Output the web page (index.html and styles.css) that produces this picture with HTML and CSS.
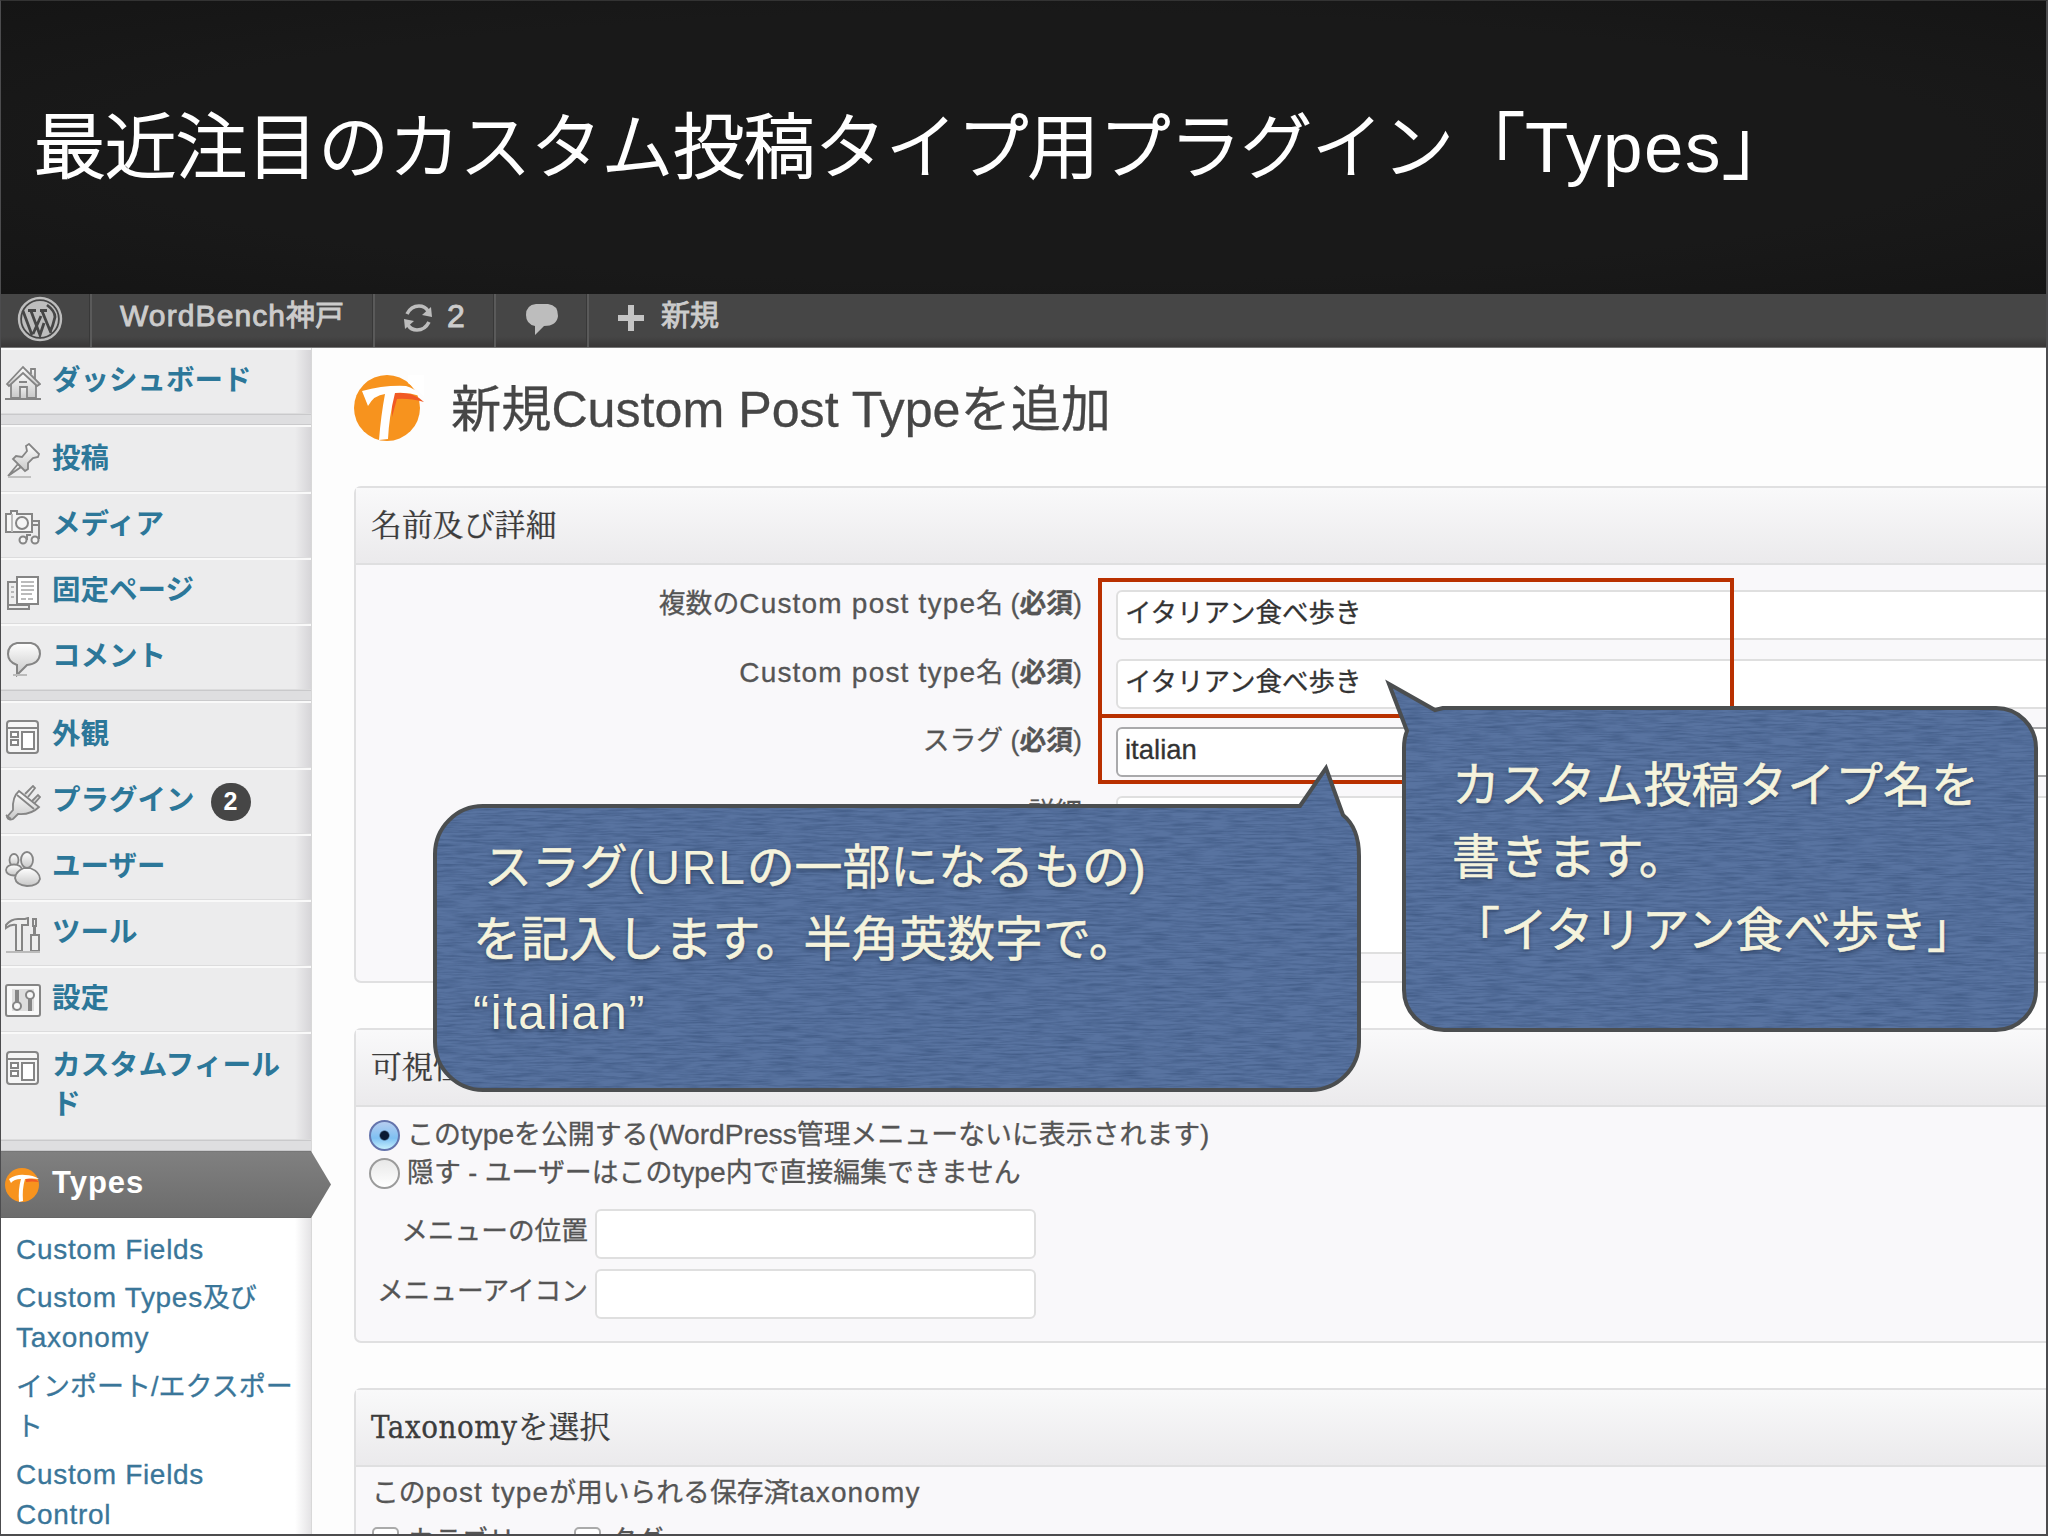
FILE: index.html
```html
<!DOCTYPE html>
<html lang="ja">
<head>
    <meta charset="UTF-8">
    <meta name="viewport" content="width=device-width, initial-scale=1.0">
    <title>最近注目のカスタム投稿タイプ用プラグイン「Types」</title>
    <link rel="stylesheet" href="styles.css">
</head>
<body>
<svg class="defs" width="0" height="0">
    <defs>
        <linearGradient id="metal" x1="0" y1="0" x2="0" y2="1">
            <stop offset="0" stop-color="#fff"/>
            <stop offset="1" stop-color="#c8c8c8"/>
        </linearGradient>
        <filter id="denim" x="0" y="0" width="100%" height="100%" color-interpolation-filters="sRGB">
            <feTurbulence type="fractalNoise" baseFrequency="0.035 0.45" numOctaves="3" seed="4"/>
            <feColorMatrix values="0 0 0 0 .2  0 0 0 0 .3  0 0 0 0 .46  1.1 0 0 0 -.4"/>
            <feComposite in2="SourceGraphic" operator="in" result="grain"/>
            <feMerge><feMergeNode in="SourceGraphic"/><feMergeNode in="grain"/></feMerge>
        </filter>
        <symbol id="icon-window" viewBox="0 0 36 36">
            <rect x="2" y="2" width="31" height="32" rx="3" fill="#f6f6f6" stroke="#858585" stroke-width="2"/>
            <path d="M2 9H33" stroke="#858585" stroke-width="2"/>
            <path d="M6 13h7v5H6zM6 21h7v5H6zM17 13h12v17H17z" fill="#fff" stroke="#858585" stroke-width="2"/>
        </symbol>
        <symbol id="icon-types" viewBox="0 0 70 66">
            <ellipse cx="33" cy="33" rx="33" ry="33" fill="#f7931e"/>
            <path d="M54 8L64 15L71 23V0H54Z" fill="#fff"/>
            <path d="M38 18Q58 15 70 27Q55 23 43 24L38 42Z" fill="#f15a24"/>
            <path d="M8 16Q30 10 52 11Q61 13 66 21Q54 17 41 18Q35 42 34 64L25 65Q27 40 31 19Q20 20 14 31Z" fill="#fff"/>
        </symbol>
        <symbol id="icon-types-small" viewBox="0 0 36 36">
            <circle cx="17" cy="18" r="17" fill="#f7931e"/>
            <path d="M4 12Q12 7 20 8Q28 8 34 12Q27 11 20 12Q17 22 18 34L14 35Q13 22 16 12Q9 12 6 16Z" fill="#fff"/>
            <path d="M21 12Q30 11 34 15Q27 14 21 15Z" fill="#f15a24"/>
        </symbol>
    </defs>
</svg>
<div class="slide">
    <header class="slide-header">
        <h1>最近注目のカスタム投稿タイプ用プラグイン「<span>Types</span>」</h1>
    </header>

    <nav class="adminbar">
        <div class="bar-item bar-logo">
            <svg width="46" height="46" viewBox="0 0 46 46">
                <circle cx="23" cy="23" r="21" fill="none" stroke="#bdbdbd" stroke-width="2.4"/>
                <circle cx="23" cy="23" r="18" fill="#bdbdbd"/>
                <path d="M6 15L15 39M14 15L23 39L27 27M25 15L34 37M11 14.500H19M23 14.500H30M30 9Q38 15 38 21Q36 30 33 36M16 38L24 20" fill="none" stroke="#464646" stroke-width="2.800"/>
            </svg>
        </div>
        <div class="bar-item bar-site"><span class="en">WordBench</span>神戸</div>
        <div class="bar-item bar-update">
            <svg width="32" height="30" viewBox="0 0 32 30">
                <path d="M5 11Q9 3 17 3Q23 3 26 8M27 19Q23 27 15 27Q9 27 6 22" fill="none" stroke="#bdbdbd" stroke-width="3.600"/>
                <path d="M30 14L20 12L29 4ZM2 16L12 18L3 26Z" fill="#bdbdbd"/>
            </svg>
            <span>2</span>
        </div>
        <div class="bar-item bar-comment">
            <svg width="32" height="32" viewBox="0 0 32 32">
                <path d="M10 0H22Q32 1 32 12Q31 22 18 22L9 31V22Q0 20 0 11Q0 1 10 0Z" fill="#bdbdbd"/>
            </svg>
        </div>
        <div class="bar-item bar-new">
            <svg width="26" height="26" viewBox="0 0 26 26"><path d="M10 0h6v10h10v6H16v10h-6V16H0v-6h10z" fill="#c4c4c4"/></svg>
            <span>新規</span>
        </div>
    </nav>

    <div class="admin">
        <aside class="sidebar">
            <ul class="menu">
                <li class="first">
                    <svg class="icon" viewBox="0 0 36 36" fill="url(#metal)" stroke="#858585" stroke-width="1.800">
                        <path d="M26 9V4h4v10"/><path d="M6 18V33H31V18L18 6Z"/><path d="M2 19L18 2L35 19L32 21L18 8L4 21Z"/>
                        <path d="M15 33V22h7v11M14 17h8M0 34H36" />
                    </svg>
                    <span>ダッシュボード</span>
                </li>
                <li class="sep"></li>
                <li>
                    <svg class="icon" viewBox="0 0 36 36" fill="url(#metal)" stroke="#858585" stroke-width="1.800">
                        <path d="M3 33L13 21L16 24Z"/><path d="M21 3L24 1L34 11L33 14L28 15L23 20L23 26L20 28L8 16L11 13L17 14L22 8Z"/>
                        <path d="M3 34H26" stroke="#bbb"/>
                    </svg>
                    <span>投稿</span>
                </li>
                <li>
                    <svg class="icon" viewBox="0 0 36 36" fill="#f5f5f5" stroke="#858585" stroke-width="2">
                        <path d="M1 5H6V2H12V5H27V23H1Z"/><path d="M7 5V23" stroke="#bbb"/><circle cx="17" cy="14" r="6"/>
                        <path d="M22 31V26H26M34 30V12H27M34 16H28" fill="none"/><circle cx="18" cy="31" r="3.500"/><circle cx="30" cy="31" r="3.500"/>
                    </svg>
                    <span>メディア</span>
                </li>
                <li>
                    <svg class="icon" viewBox="0 0 36 36" fill="#eee" stroke="#858585" stroke-width="2">
                        <path d="M3 7H14V34H3Z"/><path d="M3 30H24V34H3Z"/><path d="M12 2H33V29H12Z" fill="#fff"/>
                        <path d="M16 7H29M16 11H29M16 15H29M16 19H27M16 24H21M23 24H28M6 12H9M6 17H9M6 22H9" stroke="#a5a5a5" stroke-width="1.500"/>
                    </svg>
                    <span>固定ページ</span>
                </li>
                <li class="last">
                    <svg class="icon" viewBox="0 0 36 36" fill="url(#metal)" stroke="#858585" stroke-width="2">
                        <path d="M12 2H26Q35 4 35 13Q34 23 22 24L12 34V24Q3 21 3 13Q3 4 12 2Z"/><path d="M8 34H22" stroke="#bbb"/>
                    </svg>
                    <span>コメント</span>
                </li>
                <li class="sep"></li>
                <li>
                    <svg class="icon"><use href="#icon-window"/></svg>
                    <span>外観</span>
                </li>
                <li>
                    <svg class="icon" viewBox="0 0 36 36" fill="url(#metal)" stroke="#858585" stroke-width="1.800">
                        <path d="M20 9L28 1L30 3L23 12M27 16L33 10L35 12L29 19"/><path d="M14 6L34 22Q26 30 13 29L8 34Q4 36 2 32L8 25Q7 12 14 6Z"/>
                        <path d="M12 10L29 24M1 30L6 34" fill="none"/>
                    </svg>
                    <span>プラグイン</span><b class="badge">2</b>
                </li>
                <li>
                    <svg class="icon" viewBox="0 0 36 36" fill="url(#metal)" stroke="#858585" stroke-width="1.800">
                        <ellipse cx="9" cy="9" rx="4.500" ry="6"/><ellipse cx="9" cy="19" rx="8" ry="5.500"/>
                        <ellipse cx="22" cy="9" rx="6" ry="8"/><path d="M19 17H25Q35 21 35 28Q33 35 22 35Q11 34 10 27Q11 20 19 17Z"/>
                    </svg>
                    <span>ユーザー</span>
                </li>
                <li>
                    <svg class="icon" viewBox="0 0 36 36" fill="#eee" stroke="#858585" stroke-width="2">
                        <path d="M1 8Q6 2 13 2H20L23 1V8H17V34H11V8Q6 7 1 11Z"/><path d="M28 2H31V9H30V18H34V34H26V18H29V9H28Z"/><path d="M1 35H35" stroke="#bbb"/>
                    </svg>
                    <span>ツール</span>
                </li>
                <li>
                    <svg class="icon" viewBox="0 0 36 36" fill="#f8f8f8" stroke="#858585" stroke-width="2">
                        <rect x="1" y="2" width="34" height="31" rx="2"/><path d="M7 6H29V28H7Z" fill="#ddd" stroke="none"/>
                        <path d="M12 7V19M25 16V28" stroke-width="4"/><circle cx="12" cy="23" r="4"/><circle cx="25" cy="12" r="4"/>
                    </svg>
                    <span>設定</span>
                </li>
                <li class="tall">
                    <svg class="icon"><use href="#icon-window"/></svg>
                    <span>カスタムフィールド</span>
                </li>
                <li class="sep"></li>
                <li class="current">
                    <svg class="icon"><use href="#icon-types-small"/></svg>
                    <span>Types</span>
                </li>
            </ul>
            <ul class="submenu">
                <li><span class="en">Custom Fields</span></li>
                <li><span class="en">Custom Types</span>及び<br><span class="en">Taxonomy</span></li>
                <li>インポート/エクスポー<br>ト</li>
                <li><span class="en">Custom Fields<br>Control</span></li>
            </ul>
        </aside>

        <main class="content">
            <div class="page-title">
                <svg width="70" height="66"><use href="#icon-types"/></svg>
                <h2>新規Custom Post Typeを追加</h2>
            </div>

            <section class="postbox box-names">
                <h3>名前及び詳細</h3>
                <div class="field-row">
                    <label>複数の<span class="en">Custom post type</span>名 (<b>必須</b>)</label>
                    <div class="field">イタリアン食べ歩き</div>
                </div>
                <div class="field-row">
                    <label><span class="en">Custom post type</span>名 (<b>必須</b>)</label>
                    <div class="field">イタリアン食べ歩き</div>
                </div>
                <div class="field-row">
                    <label>スラグ (<b>必須</b>)</label>
                    <div class="field focused">italian</div>
                </div>
                <div class="field-row">
                    <label class="label-detail">詳細</label>
                    <div class="field area"></div>
                </div>
            </section>

            <section class="postbox box-visibility">
                <h3>可視性</h3>
                <div class="radio-row"><i class="radio checked"></i><span>この<span class="en-s">type</span>を公開する<span class="en-s">(WordPress</span>管理メニューないに表示されます)</span></div>
                <div class="radio-row"><i class="radio"></i><span>隠す - ユーザーはこの<span class="en-s">type</span>内で直接編集できません</span></div>
                <div class="small-fields">
                    <label>メニューの位置</label><div class="small-field"></div>
                    <label>メニューアイコン</label><div class="small-field"></div>
                </div>
            </section>

            <section class="postbox box-taxonomy">
                <h3><span class="serif">Taxonomy</span>を選択</h3>
                <p>この<span class="en">post type</span>が用いられる保存済<span class="en">taxonomy</span></p>
                <div class="checks">
                    <i class="check"></i><span class="check-first">カテゴリー</span>
                    <i class="check"></i><span>タグ</span>
                </div>
            </section>
        </main>
    </div>

    <!-- 赤枠 -->
    <div class="mark mark-names"></div>
    <div class="mark mark-slug"></div>

    <!-- 吹き出し -->
    <div class="bubble bubble-slug">
        <svg viewBox="430 760 934 336">
            <path d="M483 806H1300L1326 768L1343 815Q1359 828 1359 856V1042A48 48 0 0 1 1311 1090H483A48 48 0 0 1 435 1042V854A48 48 0 0 1 483 806Z" fill="#5873a0" filter="url(#denim)"/>
            <path d="M483 806H1300L1326 768L1343 815Q1359 828 1359 856V1042A48 48 0 0 1 1311 1090H483A48 48 0 0 1 435 1042V854A48 48 0 0 1 483 806Z" fill="none" stroke="#4b4e50" stroke-width="4"/>
        </svg>
        <p><span class="lead">スラグ</span><span class="en-l">(URL</span>の一部になるもの)<br>を記入します。半角英数字で。<br><span class="en-l">“italian”</span></p>
    </div>
    <div class="bubble bubble-name">
        <svg viewBox="1380 676 662 360">
            <path d="M1443 708L1435 710L1389 684L1407 731Q1404 738 1404 748V990A40 40 0 0 0 1444 1030H1996A40 40 0 0 0 2036 990V748A40 40 0 0 0 1996 708Z" fill="#5873a0" filter="url(#denim)"/>
            <path d="M1443 708L1435 710L1389 684L1407 731Q1404 738 1404 748V990A40 40 0 0 0 1444 1030H1996A40 40 0 0 0 2036 990V748A40 40 0 0 0 1996 708Z" fill="none" stroke="#4b4e50" stroke-width="4"/>
        </svg>
        <p>カスタム投稿タイプ名を<br>書きます。<br>「イタリアン食べ歩き」</p>
    </div>
</div>
</body>
</html>
```

FILE: styles.css
```css
* {
    box-sizing: border-box;
}
body {
    margin: 0;
    font-family: "Liberation Sans", "Noto Sans CJK JP", sans-serif;
    font-size: 26.8px;
    color: #555;
}
h1, h2, h3, p, ul {
    margin: 0;
    padding: 0;
    font-weight: normal;
}
ul {
    list-style: none;
}
.defs {
    position: absolute;
}
.slide {
    position: relative;
    width: 2048px;
    height: 1536px;
    overflow: hidden;
    background: #fdfdfd;
    display: flex;
    flex-direction: column;
}
.slide::after {
    content: "";
    position: absolute;
    inset: 0;
    border: 2px solid #4c4c4e;
    border-top: 1px solid #333;
    border-left-width: 1px;
    pointer-events: none;
}
.en {
    font-size: 28px;
    letter-spacing: 1.2px;
}
.en-s {
    font-size: 28.2px;
}
.slide-header {
    flex: none;
    height: 294px;
    padding: 98px 0 0 34px;
    background: radial-gradient(ellipse at 50% 50%, #191919 65%, #151515);
}
.slide-header h1 {
    font-size: 71px;
    line-height: 100px;
    font-weight: 300;
    color: #fff;
    white-space: nowrap;
    -webkit-text-stroke: 2px #fff;
}
.slide-header h1 span {
    letter-spacing: 1.5px;
    -webkit-text-stroke: 0;
}

/* 管理バー */
.adminbar {
    flex: none;
    height: 54px;
    display: flex;
    background: linear-gradient(#464646 80%, #393737);
    border-bottom: 1px solid #777;
    color: #ccc;
    font-size: 29px;
    -webkit-text-stroke: 0.9px #ccc;
}
.bar-item {
    display: flex;
    align-items: center;
    height: 53px;
    line-height: 40px;
    padding-bottom: 10px;
    border-right: 2px solid #5a5a5a;
    box-shadow: inset -1px 0 #383838;
}
.bar-logo {
    width: 92px;
    padding: 0 0 4px 17px;
}
.bar-site {
    width: 283px;
    padding-left: 28px;
}
.bar-site .en {
    font-size: 30px;
    letter-spacing: 1.1px;
}
.bar-update {
    width: 121px;
    padding-left: 27px;
    gap: 13px;
}
.bar-update span {
    font-size: 32px;
}
.bar-update svg, .bar-new svg {
    position: relative;
    top: 2px;
}
.bar-comment {
    width: 93px;
    padding: 0 0 2px 30px;
}
.bar-new {
    border: 0;
    box-shadow: none;
    padding-left: 29px;
    gap: 17px;
}

/* サイドバー */
.admin {
    flex: 1;
    min-height: 0;
    display: flex;
}
.sidebar {
    flex: none;
    width: 312px;
    border-right: 1px solid #d8d8d8;
    background: linear-gradient(90deg, #fff 295px, #e4e3e5 311px);
}
.menu li {
    height: 66.2px;
    padding: 11.3px 0 0 5px;
    display: flex;
    gap: 11px;
    border-top: 2px solid #f9f9f9;
    border-bottom: 1px solid #dcdcdd;
    background: linear-gradient(90deg, #ececed 295px, #d6d5d8 311px);
    color: #2c7799;
    font-size: 28.5px;
    font-weight: bold;
    line-height: 39.5px;
}
.menu .icon {
    flex: none;
    width: 36px;
    height: 36px;
    margin-top: 4px;
}
.menu .sep {
    height: 11.200px;
    padding: 0;
    border-top: 1px solid #c9c9cb;
    border-bottom: 1px solid #cacacc;
    background: #dedee0;
}
.menu .tall {
    height: 107.500px;
}
.menu .tall span {
    width: 234px;
    font-size: 28.800px;
}
.menu .current {
    position: relative;
    height: 67px;
    border-top: 1px solid #777;
    border-bottom: 1px solid #666;
    background: linear-gradient(#808080, #6c6c6c);
    color: #fff;
}
.menu .current span {
    font-size: 31px;
    letter-spacing: 1px;
}
.menu .current::after {
    content: "";
    position: absolute;
    left: 311px;
    top: -1px;
    width: 20px;
    height: 67px;
    background: linear-gradient(#808080, #6c6c6c);
    clip-path: polygon(0 0, 100% 50%, 0 100%);
}
.badge {
    width: 40px;
    height: 38px;
    margin: 2px 0 0 5px;
    border-radius: 19px;
    background: #464646;
    color: #fff;
    font-size: 25px;
    line-height: 36px;
    text-align: center;
}
.submenu {
    padding: 12px 0 0 16px;
    color: #3a7699;
    font-size: 27px;
    line-height: 40px;
    -webkit-text-stroke: 0.3px;
}
.submenu .en {
    letter-spacing: 0.700px;
}
.submenu li {
    margin-bottom: 8.300px;
    white-space: nowrap;
}

/* コンテンツ */
.content {
    flex: 1;
    min-width: 0;
    padding-left: 42px;
    -webkit-text-stroke: 0.3px;
}
.page-title {
    display: flex;
    align-items: center;
    gap: 27px;
    height: 138px;
    padding-bottom: 18px;
}
.page-title h2 {
    padding-top: 4px;
    font-size: 50.200px;
    line-height: 60px;
    color: #464646;
}
.postbox {
    width: 1720px;
    border: 2px solid #e0e0e1;
    border-radius: 7px;
    background: #f9f8fa;
}
.postbox h3 {
    height: 77px;
    padding-left: 15px;
    border-bottom: 2px solid #dfdfe0;
    background: linear-gradient(#f9f9fa, #ebeaec);
    color: #3c3c3c;
    font-family: "DejaVu Serif Condensed", "Noto Serif CJK JP", "Noto Sans CJK JP", serif;
    font-size: 30.900px;
    line-height: 74px;
}
.postbox .serif {
    letter-spacing: 0.600px;
}
.box-names {
    height: 497px;
    margin-bottom: 45px;
}
.field-row {
    display: flex;
    height: 68.700px;
    line-height: 40px;
}
.box-names h3 {
    margin-bottom: 25px;
}
.field-row label {
    width: 726px;
    margin-top: -6px;
    text-align: right;
    white-space: nowrap;
}
.field-row .label-detail {
    margin-top: -3px;
}
.field {
    flex: 1;
    height: 50px;
    margin-left: 34px;
    padding: 1px 7px;
    border: 2px solid #dfdfdf;
    border-radius: 6px;
    background: #fff;
    color: #333;
    font-size: 26.500px;
}
.focused {
    border-color: #a9a9ab;
    font-size: 27.500px;
}
.area {
    height: 158px;
}
.box-visibility {
    height: 315px;
    margin-bottom: 45px;
}
.box-visibility h3 {
    margin-bottom: 9px;
}
.radio-row {
    display: flex;
    align-items: center;
    gap: 7px;
    height: 38px;
    padding-left: 13px;
    white-space: nowrap;
    font-size: 26.900px;
}
.radio-row > span {
    padding-bottom: 6px;
}
.radio {
    width: 31px;
    height: 31px;
    border: 2px solid #9b9b9b;
    border-radius: 50%;
    background: linear-gradient(#e8e8e8, #fff);
}
.checked {
    border-color: #6474ac;
    background: radial-gradient(circle, #0a1a33 4px, transparent 5.500px), linear-gradient(#b6cdf0, #7fc0f2 60%, #c5f0fd);
}
.small-fields {
    display: grid;
    grid-template-columns: 232px 441px;
    grid-auto-rows: 50px;
    gap: 10px 7px;
    margin-top: 17px;
    line-height: 44px;
}
.small-fields label {
    text-align: right;
    font-size: 26.700px;
}
.small-field {
    border: 2px solid #dfdfdf;
    border-radius: 6px;
    background: #fff;
}
.box-taxonomy {
    height: 400px;
}
.box-taxonomy p {
    padding: 6px 0 0 16px;
    line-height: 40px;
}
.box-taxonomy .en {
    letter-spacing: 1.100px;
}
.checks {
    display: flex;
    padding: 12px 0 0 16px;
    line-height: 32px;
}
.check {
    width: 27px;
    height: 27px;
    margin: 2px 9px 0 0;
    border: 2px solid #aaa;
    border-radius: 5px;
    background: #fff;
}
.check-first {
    width: 166px;
}

/* 注釈 */
.mark {
    position: absolute;
    left: 1098px;
    width: 636px;
    border: 4px solid #b93000;
}
.mark-names {
    top: 578px;
    height: 140px;
}
.mark-slug {
    top: 714px;
    height: 70px;
}
.bubble {
    position: absolute;
    color: #f5f3dc;
    font-size: 47.900px;
    font-weight: 300;
    line-height: 72.300px;
    white-space: nowrap;
    text-shadow: 0 2px 4px rgba(20, 35, 60, 0.6);
}
.bubble svg {
    position: absolute;
    left: 0;
    top: 0;
    width: 100%;
    height: 100%;
}
.bubble p {
    position: relative;
    -webkit-text-stroke: 0.6px #f5f3dc;
}
.bubble .lead {
    padding-left: 11px;
}
.en-l {
    letter-spacing: 1.800px;
    -webkit-text-stroke: 0;
}
.bubble-slug {
    left: 430px;
    top: 760px;
    width: 934px;
    height: 336px;
    padding: 72px 0 0 43px;
}
.bubble-name {
    left: 1380px;
    top: 676px;
    width: 662px;
    height: 360px;
    padding: 74px 0 0 72px;
}
```
